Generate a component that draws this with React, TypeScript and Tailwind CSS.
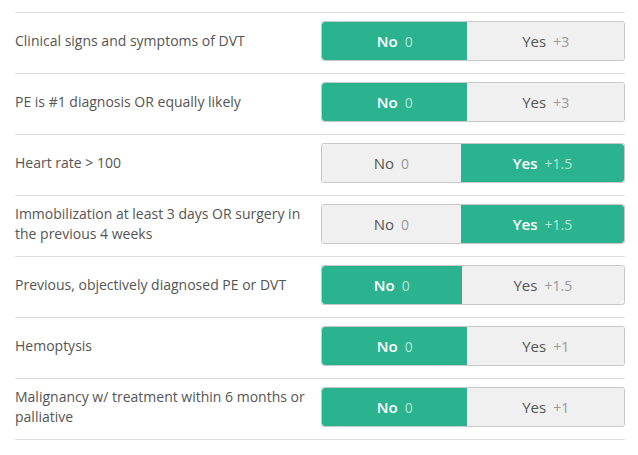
const rows = [
  { label: "Clinical signs and symptoms of DVT", yes: "+3", value: false },
  { label: "PE is #1 diagnosis OR equally likely", yes: "+3", value: false },
  { label: "Heart rate > 100", yes: "+1.5", value: true },
  {
    label: "Immobilization at least 3 days OR surgery in the previous 4 weeks",
    yes: "+1.5",
    value: true,
  },
  { label: "Previous, objectively diagnosed PE or DVT", yes: "+1.5", value: false },
  { label: "Hemoptysis", yes: "+1", value: false },
  {
    label: "Malignancy w/ treatment within 6 months or palliative",
    yes: "+1",
    value: false,
  },
];

function Segment({
  text,
  points,
  active,
  side,
}: {
  text: string;
  points: string;
  active: boolean;
  side: "left" | "right";
}) {
  return (
    <div
      className={`flex flex-auto items-center justify-center ${
        side === "left" ? "rounded-l-[3px]" : "rounded-r-[3px]"
      } ${active ? "bg-[#2bb390] text-white font-semibold" : "bg-[#f0f0f0] text-[#555]"}`}
    >
      <span className="text-[15px] leading-none">
        {text}
        <span
          className={`ml-[7px] text-[14px] font-normal ${
            active ? "text-[#b4e6d6]" : "text-[#999]"
          }`}
        >
          {points}
        </span>
      </span>
    </div>
  );
}

export default function App() {
  return (
    <div
      className="bg-white px-[15px] pt-3 text-[14px] text-[#555]"
      style={{ fontFamily: '"Open Sans", sans-serif' }}
    >
      <div className="w-[610px] border-t border-[#ddd]">
        {rows.map(({ label, yes, value }, index) => (
          <div
            key={index}
            className="flex items-center border-b border-[#ddd] pt-2 pb-3"
          >
            <div className="flex-1 pr-4 leading-5">{label}</div>
            <div className="flex h-10 w-[304px] overflow-hidden rounded-[3px] border border-[#c8c8c8]">
              <Segment text="No" points="0" active={!value} side="left" />
              <Segment text="Yes" points={yes} active={value} side="right" />
            </div>
          </div>
        ))}
      </div>
    </div>
  );
}
